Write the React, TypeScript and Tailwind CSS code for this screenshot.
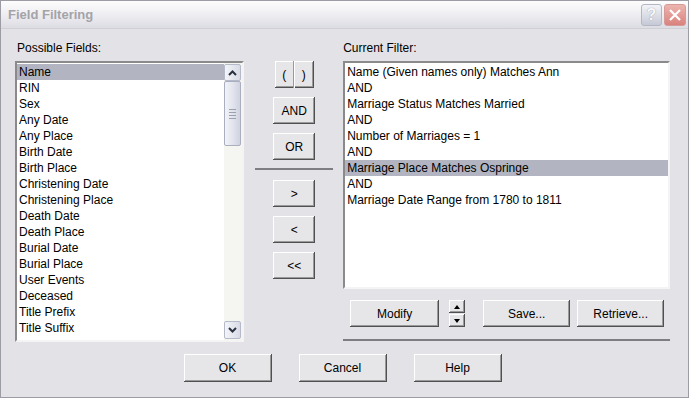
import type { ReactNode } from 'react'

const fields = [
  'Name',
  'RIN',
  'Sex',
  'Any Date',
  'Any Place',
  'Birth Date',
  'Birth Place',
  'Christening Date',
  'Christening Place',
  'Death Date',
  'Death Place',
  'Burial Date',
  'Burial Place',
  'User Events',
  'Deceased',
  'Title Prefix',
  'Title Suffix',
]

const filter = [
  'Name (Given names only) Matches Ann',
  'AND',
  'Marriage Status Matches Married',
  'AND',
  'Number of Marriages = 1',
  'AND',
  'Marriage Place Matches Ospringe',
  'AND',
  'Marriage Date Range from 1780 to 1811',
]

const bevel =
  'bg-[#e6e6e9] shadow-[inset_-1px_-1px_#505050,inset_1px_1px_#ffffff,inset_-2px_-2px_#9a9a9a]'

function Btn({ children, className = '' }: { children: ReactNode; className?: string }) {
  return (
    <div className={`flex h-[27px] items-center justify-center text-[12px] text-black ${bevel} ${className}`}>
      {children}
    </div>
  )
}

function Arrow({ up }: { up?: boolean }) {
  return (
    <svg width="9" height="6" viewBox="0 0 9 6">
      <path
        d={up ? 'M1 5 L4.5 1.5 L8 5' : 'M1 1 L4.5 4.5 L8 1'}
        fill="none"
        stroke="#2a3140"
        strokeWidth="2"
      />
    </svg>
  )
}

function Scrollbar() {
  return (
    <div className="flex w-[18px] flex-col bg-[#f5f5f1] py-[1px] pr-[1px]">
      <div className="flex h-[17px] items-center justify-center rounded-[2px] border border-[#b5bac8] bg-gradient-to-r from-[#f4f5fa] to-[#d8dbe6]">
        <Arrow up />
      </div>
      <div className="flex h-[65px] flex-col items-center justify-center gap-[2px] rounded-[2px] border border-[#a9afbf] bg-gradient-to-r from-[#f2f3f8] via-[#e3e5ee] to-[#cfd3e0]">
        <div className="h-[1px] w-[7px] bg-[#9aa0b0]" />
        <div className="h-[1px] w-[7px] bg-[#9aa0b0]" />
        <div className="h-[1px] w-[7px] bg-[#9aa0b0]" />
        <div className="h-[1px] w-[7px] bg-[#9aa0b0]" />
      </div>
      <div className="flex-1" />
      <div className="flex h-[18px] items-center justify-center rounded-[2px] border border-[#b5bac8] bg-gradient-to-r from-[#f4f5fa] to-[#d8dbe6]">
        <Arrow />
      </div>
    </div>
  )
}

const sunken = 'border-2 border-t-[#8a8a8a] border-l-[#8a8a8a] border-b-[#f4f4f4] border-r-[#f4f4f4] bg-white'

export default function App() {
  return (
    <div
      className="flex h-[398px] w-[689px] flex-col overflow-hidden border border-[#9c9ca4] bg-[#e3e3e7] text-black"
      style={{ fontFamily: '"Liberation Sans", Arial, sans-serif' }}
    >
      {/* title bar */}
      <div className="flex h-[28px] items-center justify-between border-b border-[#cfcfd6] bg-gradient-to-b from-[#fdfdfd] via-[#eeeef2] to-[#dcdce3] pl-[7px] pr-[2px]">
        <span className="text-[13px] font-bold text-[#a3a3a8]">Field Filtering</span>
        <div className="flex gap-[2px]">
          <div className="flex h-[22px] w-[21px] items-center justify-center rounded-[3px] border border-[#b3b7c4] bg-gradient-to-b from-[#f3f4f8] to-[#c6c9d6] text-[16px] font-bold text-[#f8f8fa] [text-shadow:0_0_1px_#7d8294]">
            ?
          </div>
          <div className="flex h-[22px] w-[22px] items-center justify-center rounded-[3px] border border-[#d69a98] bg-gradient-to-b from-[#ecb4ae] to-[#d9827e]">
            <svg width="14" height="14" viewBox="0 0 14 14">
              <path d="M2 2 L12 12 M12 2 L2 12" stroke="#fff" strokeWidth="2.2" />
            </svg>
          </div>
        </div>
      </div>

      {/* body */}
      <div className="flex flex-1 flex-col pl-[14px] pr-[18px] pt-[12px]">
        <div className="flex">
          {/* left */}
          <div className="flex w-[230px] flex-col">
            <div className="h-[14px] pl-[2px] text-[12px] leading-[14px]">Possible Fields:</div>
            <div className={`mt-[6px] flex h-[281px] ${sunken}`}>
              <div className="flex-1 pt-[1px]">
                {fields.map((f, i) => (
                  <div
                    key={f}
                    className={`h-[16px] pl-[2px] text-[12px] leading-[16px] ${i === 0 ? 'bg-[#b2b5c1]' : ''}`}
                  >
                    {f}
                  </div>
                ))}
              </div>
              <Scrollbar />
            </div>
          </div>

          {/* middle */}
          <div className="ml-[11px] flex w-[78px] flex-col items-center pt-[20px]">
            <div className={`flex h-[27px] w-[39px] ${bevel}`}>
              <div className="flex w-[19px] items-center justify-center text-[12px] shadow-[inset_-1px_0_#9a9a9a]">(</div>
              <div className="flex flex-1 items-center justify-center text-[12px] shadow-[inset_1px_0_#ffffff]">)</div>
            </div>
            <Btn className="mt-[9px] w-[42px]">AND</Btn>
            <Btn className="mt-[9px] w-[42px]">OR</Btn>
            <div className="mt-[8px] h-[2px] w-[78px] bg-[#7e7e82]" />
            <Btn className="mt-[10px] w-[42px]">&gt;</Btn>
            <Btn className="mt-[9px] w-[42px]">&lt;</Btn>
            <Btn className="mt-[9px] w-[42px]">&lt;&lt;</Btn>
          </div>

          {/* right */}
          <div className="ml-[10px] flex w-[328px] flex-col">
            <div className="h-[14px] text-[12px] leading-[14px]">Current Filter:</div>
            <div className={`mt-[6px] h-[228px] pt-[1px] ${sunken}`}>
              {filter.map((f, i) => (
                <div
                  key={i}
                  className={`h-[16px] pl-[2px] text-[12px] leading-[16px] ${i === 6 ? 'bg-[#b2b5c1]' : ''}`}
                >
                  {f}
                </div>
              ))}
            </div>
            <div className="mt-[11px] flex items-center pl-[7px]">
              <Btn className="w-[89px]">Modify</Btn>
              <div className="ml-[10px] flex flex-col gap-[1px]">
                <div className={`flex h-[13px] w-[16px] items-center justify-center ${bevel}`}>
                  <svg width="6" height="4" viewBox="0 0 6 4"><path d="M0 4 L3 0 L6 4 Z" fill="#000" /></svg>
                </div>
                <div className={`flex h-[13px] w-[16px] items-center justify-center ${bevel}`}>
                  <svg width="6" height="4" viewBox="0 0 6 4"><path d="M0 0 L3 4 L6 0 Z" fill="#000" /></svg>
                </div>
              </div>
              <Btn className="ml-[18px] w-[87px]">Save...</Btn>
              <Btn className="ml-[7px] w-[87px]">Retrieve...</Btn>
            </div>
            <div className="mt-[12px] h-[2px] w-full bg-[#7e7e82]" />
          </div>
        </div>

        {/* bottom */}
        <div className="mt-[12px] flex justify-center gap-[27px]">
          <Btn className="h-[28px] w-[88px]">OK</Btn>
          <Btn className="h-[28px] w-[88px]">Cancel</Btn>
          <Btn className="h-[28px] w-[88px]">Help</Btn>
        </div>
      </div>
    </div>
  )
}
